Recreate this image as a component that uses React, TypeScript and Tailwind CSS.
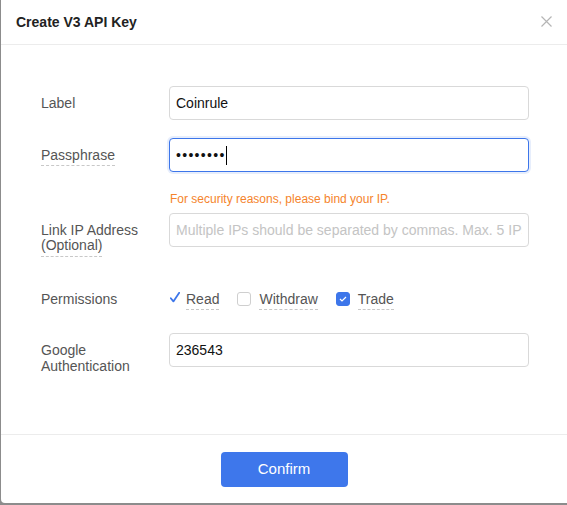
import { useState } from "react";

const FONT = { fontFamily: '"Liberation Sans", Arial, Helvetica, sans-serif' };

function Field({ label, children }: { label: React.ReactNode; children: React.ReactNode }) {
  return (
    <div className="flex h-[34px]">
      <div className="w-[128px] shrink-0 pt-[9px] text-[14px] leading-[16px] text-[#555]">{label}</div>
      <div className="flex-1">{children}</div>
    </div>
  );
}

const inputCls =
  "block w-full h-[34px] rounded-[4px] border border-[#d9d9d9] bg-white px-[6px] text-[14px] text-[#111] outline-none placeholder:text-[#c4c4c4]";

const dashed = "border-b border-dashed border-[#c8c8c8]";

function Check({ on, onClick }: { on: boolean; onClick: () => void }) {
  return (
    <button
      onClick={onClick}
      className={`w-[14px] h-[14px] rounded-[3px] border flex items-center justify-center ${
        on ? "bg-[#3d76ea] border-[#3d76ea]" : "bg-white border-[#cfcfcf]"
      }`}
    >
      {on && (
        <svg width="8" height="6" viewBox="0 0 8 6">
          <path d="M1 3L3 5L7 1" fill="none" stroke="#fff" strokeWidth="1.2" />
        </svg>
      )}
    </button>
  );
}

export default function App() {
  const [withdraw, setWithdraw] = useState(false);
  const [trade, setTrade] = useState(true);

  return (
    <div className="w-[567px] h-[505px] bg-[#8c8c8c] pl-px pb-[2px]" style={FONT}>
      <div className="h-full bg-white rounded-bl-[4px] flex flex-col">
        {/* Header */}
        <div className="h-[45px] shrink-0 border-b border-[#ececec] flex items-center justify-between px-[15px]">
          <h2 className="text-[14px] font-bold text-[#222]">Create V3 API Key</h2>
          <button className="text-[#b5b5b5] -mt-px">
            <svg width="11" height="11" viewBox="0 0 11 11" fill="none" stroke="currentColor" strokeWidth="1.2">
              <path d="M0.5 0.5L10.5 10.5M10.5 0.5L0.5 10.5" />
            </svg>
          </button>
        </div>

        {/* Body */}
        <div className="flex-1 pl-[40px] pr-[38px] pt-[41px]">
          <Field label="Label">
            <input className={inputCls} defaultValue="Coinrule" />
          </Field>

          <div className="mt-[18px]">
            <Field label={<span className={`${dashed} pb-[2px]`}>Passphrase</span>}>
              <div className="relative">
                <input
                  type="password"
                  className="block w-full h-[34px] rounded-[4px] border border-[#3d76ea] bg-white px-[6px] text-[14px] tracking-[1.3px] text-[#111] outline-none shadow-[0_0_0_2px_rgba(61,118,234,0.12)]"
                  defaultValue="coinrule"
                />
                <span className="absolute left-[57px] top-[8px] w-px h-[19px] bg-black" />
              </div>
            </Field>
          </div>

          <div className="mt-[19px] pl-[129px] text-[12px] leading-[16px] text-[#f5842c]">
            For security reasons, please bind your IP.
          </div>

          <div className="mt-[6px] flex h-[34px]">
            <div className="w-[128px] shrink-0 pt-[10px] text-[14px] leading-[15px] text-[#555]">
              <div>Link IP Address</div>
              <span className={`${dashed} pb-[3px]`}>(Optional)</span>
            </div>
            <input className={inputCls} placeholder="Multiple IPs should be separated by commas. Max. 5 IPs" />
          </div>

          <div className="mt-[35px] flex h-[34px] items-center">
            <div className="w-[128px] shrink-0 text-[14px] leading-[16px] text-[#555]">Permissions</div>
            <div className="flex items-center text-[14px] leading-[16px] text-[#555]">
              <svg width="10" height="11" viewBox="0 0 10 11" className="mr-[6px] ml-px -mt-[3px]">
                <path d="M0.8 6.2L3.4 9.4L9.2 0.8" fill="none" stroke="#3d76ea" strokeWidth="1.8" strokeLinecap="round" strokeLinejoin="round" />
              </svg>
              <span className={`${dashed} pb-[2px] translate-y-[1px]`}>Read</span>

              <div className="ml-[18px]">
                <Check on={withdraw} onClick={() => setWithdraw(!withdraw)} />
              </div>
              <span className={`ml-[8px] ${dashed} pb-[2px] translate-y-[1px]`}>Withdraw</span>

              <div className="ml-[18px]">
                <Check on={trade} onClick={() => setTrade(!trade)} />
              </div>
              <span className={`ml-[8px] ${dashed} pb-[2px] translate-y-[1px]`}>Trade</span>
            </div>
          </div>

          <div className="mt-[17px]">
            <Field
              label={
                <>
                  <div>Google</div>
                  <div>Authentication</div>
                </>
              }
            >
              <input className={inputCls} defaultValue="236543" />
            </Field>
          </div>
        </div>

        {/* Footer */}
        <div className="h-[69px] shrink-0 border-t border-[#ececec] flex justify-center pt-[17px]">
          <button className="w-[127px] h-[35px] rounded-[4px] bg-[#3e77eb] text-white text-[15px]">Confirm</button>
        </div>
      </div>
    </div>
  );
}
